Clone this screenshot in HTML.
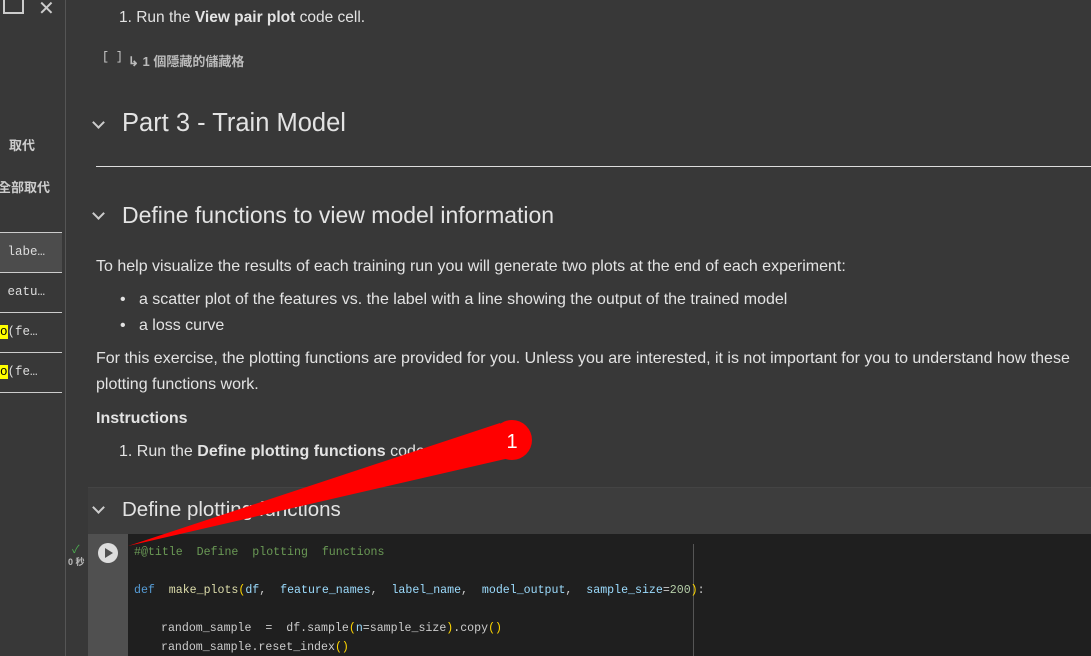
<!DOCTYPE html><html><head><style>
body{margin:0;width:1091px;height:656px;background:#383838;font-family:"Liberation Sans","Noto Sans CJK TC",sans-serif;color:#e3e3e3;position:relative;overflow:hidden}
.a{position:absolute;white-space:nowrap}
.side{position:absolute;left:0;top:0;width:65px;height:656px;background:#383838;border-right:1px solid #555}
.row{position:absolute;left:0;width:62px;height:39px;border-bottom:1px solid #ccc;font-family:"Liberation Mono",monospace;font-size:12.5px;color:#ddd;line-height:39px}
.mono{font-family:"Liberation Mono",monospace;font-size:11.6px}
.chev{position:absolute;width:7px;height:7px;border-right:2px solid #ccc;border-bottom:2px solid #ccc;transform:rotate(45deg)}
</style></head><body>
<div class="side">
<div class="a" style="left:3px;top:-2px;width:17px;height:14px;border:2px solid #ccc;border-top:none"></div>
<div class="a" style="left:38px;top:-4px;font-size:20px;color:#ccc">✕</div>
<div class="a" style="left:9px;top:135px;font-size:13px;font-weight:bold;color:#ccc">取代</div>
<div class="a" style="left:-2px;top:177px;font-size:13px;font-weight:bold;color:#ccc">全部取代</div>
<div class="row" style="top:232px;border-top:1px solid #ccc;background:#4c4c4c">&nbsp;labe…</div>
<div class="row" style="top:273px">&nbsp;eatu…</div>
<div class="row" style="top:313px"><span style="background:#ff0;color:#000">o</span>(fe…</div>
<div class="row" style="top:353px"><span style="background:#ff0;color:#000">o</span>(fe…</div>
</div>
<div class="a" style="left:119px;top:9px;font-size:15.5px">1. Run the <b>View pair plot</b> code cell.</div>
<div class="a mono" style="left:102px;top:51px;color:#ccc">[ ]</div>
<div class="a" style="left:128px;top:51px;font-size:13px;color:#bbb;font-weight:bold">↳ 1 個隱藏的儲藏格</div>
<div class="chev" style="left:94px;top:118px"></div>
<div class="a" style="left:122px;top:109px;font-size:25.5px">Part 3 - Train Model</div>
<div class="a" style="left:96px;top:166px;width:995px;height:1px;background:#ddd"></div>
<div class="chev" style="left:94px;top:209px"></div>
<div class="a" style="left:122px;top:202px;font-size:23px">Define functions to view model information</div>
<div class="a" style="left:96px;top:258px;font-size:16px">To help visualize the results of each training run you will generate two plots at the end of each experiment:</div>
<div class="a" style="left:120px;top:291px;font-size:16px">•&nbsp;&nbsp; a scatter plot of the features vs. the label with a line showing the output of the trained model</div>
<div class="a" style="left:120px;top:317px;font-size:16px">•&nbsp;&nbsp; a loss curve</div>
<div class="a" style="left:96px;top:346px;font-size:16px;line-height:26px;white-space:normal;width:990px">For this exercise, the plotting functions are provided for you. Unless you are interested, it is not important for you to understand how these plotting functions work.</div>
<div class="a" style="left:96px;top:410px;font-size:16px;font-weight:bold">Instructions</div>
<div class="a" style="left:119px;top:443px;font-size:16px">1. Run the <b>Define plotting functions</b> code cell.</div>
<div class="a" style="left:88px;top:487px;width:1003px;height:47px;background:#3d3d3d;border-top:1px solid #444"></div>
<div class="chev" style="left:94px;top:503px"></div>
<div class="a" style="left:122px;top:498px;font-size:20.5px">Define plotting functions</div>
<div class="a" style="left:88px;top:534px;width:40px;height:122px;background:#505050"></div>
<div class="a" style="left:128px;top:534px;width:963px;height:122px;background:#1f1f1f"></div>
<div class="a" style="left:693px;top:544px;width:1px;height:112px;background:#555"></div>
<div class="a" style="left:98px;top:543px;width:20px;height:20px;border-radius:50%;background:#ddd"></div>
<div class="a" style="left:105px;top:548px;width:0;height:0;border-left:8px solid #505050;border-top:5px solid transparent;border-bottom:5px solid transparent"></div>
<div class="a" style="left:72px;top:541px;font-size:11px;color:#4caf50">✓</div>
<div class="a" style="left:68px;top:555px;font-size:9px;color:#bbb;font-weight:bold">0 秒</div>
<div class="a mono" style="left:134px;top:546px;color:#6a9955">#@title&nbsp; Define&nbsp; plotting&nbsp; functions</div>
<div class="a mono" style="left:134px;top:584px;color:#dcdcaa"><span style="color:#569cd6">def</span>&nbsp; make_plots<span style="color:#ffd700">(</span><span style="color:#9cdcfe">df</span><span style="color:#ccc">,&nbsp; </span><span style="color:#9cdcfe">feature_names</span><span style="color:#ccc">,&nbsp; </span><span style="color:#9cdcfe">label_name</span><span style="color:#ccc">,&nbsp; </span><span style="color:#9cdcfe">model_output</span><span style="color:#ccc">,&nbsp; </span><span style="color:#9cdcfe">sample_size</span><span style="color:#ccc">=</span><span style="color:#b5cea8">200</span><span style="color:#ffd700">)</span><span style="color:#ccc">:</span></div>
<div class="a mono" style="left:161px;top:622px;color:#ccc">random_sample&nbsp; =&nbsp; df.sample<span style="color:#ffd700">(</span><span style="color:#9cdcfe">n</span>=sample_size<span style="color:#ffd700">)</span>.copy<span style="color:#ffd700">()</span></div>
<div class="a mono" style="left:161px;top:641px;color:#ccc">random_sample.reset_index<span style="color:#ffd700">()</span></div>
<svg class="a" style="left:0;top:0" width="1091" height="656"><polygon points="128,546 500,423 518,456" fill="#f00"/><circle cx="512" cy="440" r="20" fill="#f00"/><text x="512" y="448" fill="#fff" font-size="20" text-anchor="middle" font-family="Liberation Sans">1</text></svg>
</body></html>
